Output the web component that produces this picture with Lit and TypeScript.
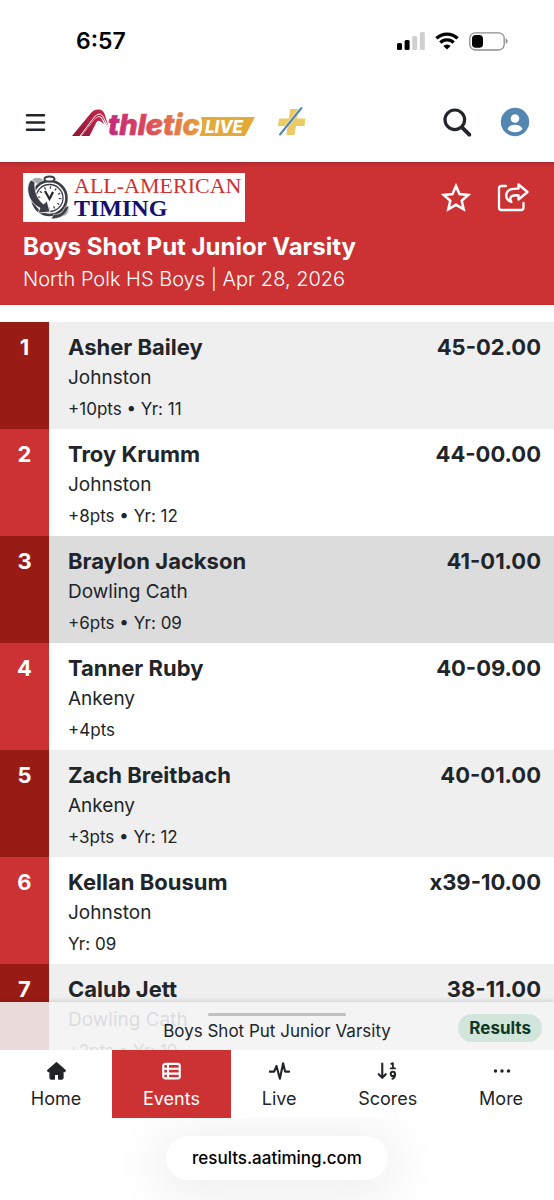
import { LitElement, html, css, svg, nothing } from "lit";
import { customElement, property, state } from "lit/decorators.js";
import { classMap } from "lit/directives/class-map.js";

interface Result {
  place: number;
  name: string;
  school: string;
  meta: string;
  mark: string;
  highlighted?: boolean;
}

const RESULTS: Result[] = [
  { place: 1, name: "Asher Bailey", school: "Johnston", meta: "+10pts • Yr: 11", mark: "45-02.00" },
  { place: 2, name: "Troy Krumm", school: "Johnston", meta: "+8pts • Yr: 12", mark: "44-00.00" },
  { place: 3, name: "Braylon Jackson", school: "Dowling Cath", meta: "+6pts • Yr: 09", mark: "41-01.00", highlighted: true },
  { place: 4, name: "Tanner Ruby", school: "Ankeny", meta: "+4pts", mark: "40-09.00" },
  { place: 5, name: "Zach Breitbach", school: "Ankeny", meta: "+3pts • Yr: 12", mark: "40-01.00" },
  { place: 6, name: "Kellan Bousum", school: "Johnston", meta: "Yr: 09", mark: "x39-10.00" },
  { place: 7, name: "Calub Jett", school: "Dowling Cath", meta: "+2pts • Yr: 10", mark: "38-11.00" },
];

const ICONS = {
  home: svg`<path d="M8 1.500 1 7.700l.6.7 1.300-.7v5.700a1 1 0 0 0 1 1h2.300v-3.800h3.600v3.800h2.300a1 1 0 0 0 1-1V7.700l1.300.7.6-.7z" fill="currentColor" stroke="currentColor" stroke-width="1.200" stroke-linejoin="round"/>`,
  events: svg`<rect x="1.400" y="2.300" width="13.200" height="11.600" rx="1.600" fill="none" stroke="currentColor" stroke-width="1.700"/><path d="M2 6.200h12M2 10.100h12M5.200 3v10.500" fill="none" stroke="currentColor" stroke-width="1.700"/>`,
  live: svg`<path d="M.2 8.500h3.600L5.700 4l2.700 10.200L11 1.800l1.600 6.700h3.200" transform="translate(-.1 0)" fill="none" stroke="currentColor" stroke-width="1.700" stroke-linecap="round" stroke-linejoin="round"/>`,
  scores: svg`<path d="M3.800 2v11.300M1 10.600l2.800 2.900 2.800-2.900" fill="none" stroke="currentColor" stroke-width="1.700" stroke-linecap="round" stroke-linejoin="round"/><path d="M11 2.300l1.300-.6v4M10.600 5.900h3.400" fill="none" stroke="currentColor" stroke-width="1.500" stroke-linecap="round" stroke-linejoin="round"/><circle cx="12.300" cy="10.300" r="1.700" fill="none" stroke="currentColor" stroke-width="1.600"/><path d="M14 10.500c0 1.900-.8 3.100-2 3.700" fill="none" stroke="currentColor" stroke-width="1.600" stroke-linecap="round"/>`,
  more: svg`<circle cx="3.200" cy="8" r="1.400" fill="currentColor"/><circle cx="8.400" cy="8" r="1.400" fill="currentColor"/><circle cx="13.600" cy="8" r="1.400" fill="currentColor"/>`,
};

type IconName = keyof typeof ICONS;

const TABS: { label: string; icon: IconName }[] = [
  { label: "Home", icon: "home" },
  { label: "Events", icon: "events" },
  { label: "Live", icon: "live" },
  { label: "Scores", icon: "scores" },
  { label: "More", icon: "more" },
];

@customElement("phone-status")
class PhoneStatus extends LitElement {
  static styles = css`
    :host {
      display: flex;
      align-items: center;
      justify-content: space-between;
      height: 82px;
      padding: 0 46px 0 76px;
      color: #000;
    }
    .time {
      font-size: 23px;
      font-weight: 600;
    }
    .icons {
      display: flex;
      align-items: center;
      gap: 10px;
    }
  `;

  render() {
    return html`
      <span class="time">6:57</span>
      <span class="icons">
        <svg width="28" height="18" viewBox="0 0 28 18">
          <rect x="0" y="11" width="5" height="7" rx="1.500" />
          <rect x="7.600" y="8" width="5" height="10" rx="1.500" />
          <rect x="15.200" y="4" width="5" height="14" rx="1.500" fill="#d0d0d0" />
          <rect x="22.800" y="0" width="5" height="18" rx="1.500" fill="#d0d0d0" />
        </svg>
        <svg width="24" height="18" viewBox="0 0 24 18">
          <g fill="none" stroke="#000" stroke-width="3.300">
            <path d="M1.400 6.400a15.200 15.200 0 0 1 21.200 0" />
            <path d="M5.300 10.600a9.700 9.700 0 0 1 13.400 0" />
          </g>
          <path d="M12 17.600 8.300 13.900a5.300 5.300 0 0 1 7.400 0z" />
        </svg>
        <svg width="39" height="19" viewBox="0 0 39 19">
          <rect x=".8" y=".8" width="34.400" height="17.200" rx="5.500" fill="none" stroke="#8c8c8c" stroke-width="1.300" />
          <rect x="3" y="3" width="11" height="12.800" rx="3.800" />
          <path d="M36.700 6.500v5.600a3 3 0 0 0 0-5.600z" fill="#8c8c8c" />
        </svg>
      </span>
    `;
  }
}

@customElement("site-bar")
class SiteBar extends LitElement {
  static styles = css`
    :host {
      display: flex;
      align-items: center;
      height: 80px;
      padding: 0 24px;
    }
    button,
    a {
      display: flex;
      margin: 0;
      padding: 0;
      border: 0;
      background: none;
      color: #212529;
      cursor: pointer;
    }
    .brand {
      margin-left: 26px;
    }
    .plus {
      margin-left: 21px;
    }
    .end {
      display: flex;
      align-items: center;
      gap: 28px;
      margin-left: auto;
    }
    .athletic {
      font: italic 800 29px Inter, sans-serif;
    }
    .live {
      font: italic 800 17px Inter, sans-serif;
    }
  `;

  render() {
    return html`
      <button aria-label="Menu">
        <svg width="22" height="22" viewBox="0 0 22 22">
          <path d="M3 4.200h17M3 11.500h17M3 18.700h17" stroke="currentColor" stroke-width="2.600" stroke-linecap="round" />
        </svg>
      </button>
      <a class="brand" href="#" aria-label="AthleticLIVE">
        <svg width="185" height="42" viewBox="0 -7 185 42">
          <defs>
            <linearGradient id="word" gradientUnits="userSpaceOnUse" x1="38" y1="0" x2="130" y2="0">
              <stop offset="0" stop-color="#c52a7c" />
              <stop offset=".35" stop-color="#d8435f" />
              <stop offset=".65" stop-color="#e2704c" />
              <stop offset="1" stop-color="#e2a03c" />
            </linearGradient>
            <linearGradient id="peak" gradientUnits="userSpaceOnUse" x1="0" y1="28" x2="36" y2="6">
              <stop offset="0" stop-color="#8c1530" />
              <stop offset="1" stop-color="#cc2950" />
            </linearGradient>
          </defs>
          <path d="M0 28 18.500 5.500Q22 1.300 26 1.500c4 0 5.500 1.500 6.800 5L37 20.500 31 11.500C29 7 25.500 7.200 22.500 11L9 28z" fill="url(#peak)" />
          <path d="M9.500 28 22.500 11.500c3-3.500 6-3.500 7.500.3l2 4.200-3.500-2.500c-1.500-1.300-2.700-1-3.900.6L17.500 28z" fill="url(#peak)" />
          <path d="M8 28 22 9.500c3.500-4.500 7.500-4.500 9.500 0L37 20.500" fill="none" stroke="#fff" stroke-width="1" />
          <path d="M129 9h54l-10 19h-45.500q4.500-9.500 1.500-19z" fill="#e2ab38" />
          <text class="athletic" x="36" y="27" fill="url(#word)" stroke="url(#word)" stroke-width=".7">thletic</text>
          <text class="live" x="133" y="25" fill="#fff">LIVE</text>
        </svg>
      </a>
      <a class="plus" href="#" aria-label="Athletic plus">
        <svg width="28" height="32" viewBox="0 0 28 30">
          <path d="M12.500 2.500h7.500l-1.500 9.500h8.500l-1 6.500h-8.500L16 27.500H8.800l1.500-9H.500l1-6.500h9.800z" fill="#ebcb65" stroke="#ebcb65" stroke-linejoin="round" />
          <path d="M2 27.500 23.500 1" stroke="#fff" stroke-width="3.600" stroke-linecap="round" opacity=".45" />
          <path d="M2 27.500 23.500 1" stroke="#4f86ae" stroke-width="2" stroke-linecap="round" />
        </svg>
      </a>
      <div class="end">
        <button aria-label="Search">
          <svg width="30" height="30" viewBox="0 0 30 30" fill="none" stroke="currentColor" stroke-linecap="round">
            <circle cx="12.800" cy="12.800" r="9.800" stroke-width="3.200" />
            <path d="m20 20.300 7.300 7.400" stroke-width="3.800" />
          </svg>
        </button>
        <button aria-label="Account">
          <svg width="30" height="30" viewBox="0 0 30 30">
            <circle cx="15" cy="15" r="14.200" fill="#5386b0" />
            <circle cx="15" cy="11.500" r="4.300" fill="#fff" />
            <path d="M7.500 22c1.300-3 4-4.200 7.500-4.200s6.200 1.200 7.500 4.200c-2 2.200-4.500 3.300-7.500 3.300S9.500 24.200 7.500 22z" fill="#fff" />
          </svg>
        </button>
      </div>
    `;
  }
}

@customElement("event-header")
class EventHeader extends LitElement {
  static styles = css`
    :host {
      display: block;
      padding: 11px 25px 10px 23px;
      background: linear-gradient(#ab2930, #cc3234 5px);
      color: #fff;
    }
    .top {
      display: flex;
      justify-content: space-between;
      align-items: center;
      margin-bottom: 9px;
    }
    .logo {
      display: block;
      background: #fff;
    }
    .line1 {
      font: 22px "Liberation Serif", serif;
    }
    .line2 {
      font: bold 24px "Liberation Serif", serif;
    }
    .actions {
      display: flex;
      gap: 25px;
    }
    button {
      display: flex;
      padding: 0;
      border: 0;
      background: none;
      color: inherit;
      cursor: pointer;
    }
    h1 {
      margin: 0;
      font-size: 24px;
      line-height: 32px;
      font-weight: 700;
    }
    p {
      margin: 0;
      font-size: 20px;
      line-height: 32px;
      font-weight: 300;
    }
  `;

  render() {
    return html`
      <div class="top">
        <svg class="logo" width="222" height="49" viewBox="0 0 222 49" role="img" aria-label="All-American Timing">
          <path d="M8 8c3-4 9-4 12-1l-5 4zM42 32c5 0 5 6 1 10l-8 3z" fill="#a8abae" />
          <circle cx="26.500" cy="25" r="17" fill="#fff" stroke="#3b3e45" stroke-width="2.600" />
          <circle cx="26.500" cy="25" r="13.500" fill="none" stroke="#3b3e45" stroke-width="1.300" />
          <circle cx="26.500" cy="25" r="10.500" fill="none" stroke="#3b3e45" stroke-width="2.500" stroke-dasharray="1.200 4.298" />
          <path d="M22 18l4.500 8 3.500-7" fill="none" stroke="#24262b" stroke-width="2.200" />
          <ellipse cx="26.500" cy="6" rx="5" ry="2.600" fill="#fff" stroke="#3b3e45" stroke-width="2" />
          <path d="M8 7C2 13 4 29 17 35l-2 5 12-1-3-11-3.500 3C14 26 11 17 12 9z" fill="#3b3e45" stroke="#fff" stroke-width=".8" />
          <path d="M46 33c-2 8-8 13-18 13l3-5c6 1 9-2 11-7z" fill="#3b3e45" stroke="#fff" stroke-width=".6" />
          <text class="line1" x="51" y="20" fill="#cf3030">ALL-AMERICAN</text>
          <text class="line2" x="51" y="43" fill="#15106e">TIMING</text>
        </svg>
        <div class="actions">
          <button aria-label="Add to favorites">
            <svg width="32" height="32" viewBox="0 0 32 32">
              <path d="m16 4 3.500 8.100 8.700.8-6.500 5.800 2 8.600-7.700-4.500-7.700 4.500 2-8.600-6.500-5.800 8.700-.8z" fill="none" stroke="currentColor" stroke-width="2.500" />
            </svg>
          </button>
          <button aria-label="Share">
            <svg width="32" height="32" viewBox="0 0 32 32" fill="none" stroke="currentColor" stroke-width="2.300" stroke-linecap="round" stroke-linejoin="round">
              <path d="M9 4H4.500A2.500 2.500 0 0 0 2 6.500V25.500A2.500 2.500 0 0 0 4.500 28H24a2.500 2.500 0 0 0 2.500-2.500V21" />
              <path d="M21.500 2.500 30.500 10l-9 7.500v-4.200c-5.500-.3-8 1.200-8.200 3.200-.1 1.500.6 2.500 1.100 3.500-3-1-5.400-3.500-5.200-7 .3-4.500 4.800-6.700 12.300-6.300z" />
            </svg>
          </button>
        </div>
      </div>
      <h1>Boys Shot Put Junior Varsity</h1>
      <p>North Polk HS Boys | Apr 28, 2026</p>
    `;
  }
}

@customElement("result-list")
class ResultList extends LitElement {
  @property({ attribute: false }) results: Result[] = [];

  static styles = css`
    :host {
      display: block;
      color: #212529;
    }
    table {
      width: 100%;
      border-collapse: collapse;
    }
    td,
    th {
      padding: 9px 0 4px;
      text-align: left;
      vertical-align: top;
      font-weight: 400;
    }
    .row {
      background: #fff;
    }
    .row.odd {
      background: #efefef;
    }
    .row.highlighted {
      background: #dcdcdc;
    }
    .place {
      width: 49px;
      background: #cc3234;
      color: #fff;
      text-align: center;
      font-size: 22px;
      line-height: 32px;
      font-weight: 700;
    }
    .odd .place {
      background: #981c15;
    }
    .athlete {
      padding-left: 19px;
    }
    .name,
    .mark {
      font-size: 22px;
      line-height: 32px;
      font-weight: 700;
    }
    .mark {
      padding-right: 13px;
      text-align: right;
    }
    .school {
      font-size: 19px;
      line-height: 30px;
    }
    .meta {
      font-size: 17px;
      line-height: 32px;
    }
  `;

  render() {
    return html`
      <table aria-label="Results">
        <tbody>
          ${this.results.map(
            (r) => html`
              <tr class=${classMap({ row: true, odd: r.place % 2 === 1, highlighted: !!r.highlighted })}>
                <td class="place">${r.place}</td>
                <th class="athlete" scope="row">
                  <div class="name">${r.name}</div>
                  <div class="school">${r.school}</div>
                  <div class="meta">${r.meta}</div>
                </th>
                <td class="mark">${r.mark}</td>
              </tr>
            `
          )}
        </tbody>
      </table>
    `;
  }
}

@customElement("tab-bar")
class TabBar extends LitElement {
  @state() private active = "Events";

  static styles = css`
    :host {
      display: block;
    }
    nav {
      display: flex;
      background: #fff;
    }
    a {
      display: flex;
      flex: 1 1 auto;
      flex-direction: column;
      align-items: center;
      gap: 4px;
      padding: 11px 0 6px;
      color: #212529;
      font-size: 18px;
      line-height: 27px;
      text-decoration: none;
    }
    a.active {
      background: #cc3234;
      color: #fff;
    }
  `;

  render() {
    return html`
      <nav>
        ${TABS.map(
          (t) => html`
            <a
              href="#"
              class=${classMap({ active: t.label === this.active })}
              aria-current=${t.label === this.active ? "page" : nothing}
              @click=${() => (this.active = t.label)}
            >
              <svg width="21" height="20" viewBox="0 0 16 16">${ICONS[t.icon]}</svg>
              ${t.label}
            </a>
          `
        )}
      </nav>
    `;
  }
}

@customElement("app-root")
class AppRoot extends LitElement {
  static styles = css`
    :host {
      display: flex;
      flex-direction: column;
      height: 100vh;
      overflow: hidden;
      background: #fff;
      font-family: Inter, sans-serif;
    }
    .content {
      position: relative;
      flex: 1;
      min-height: 0;
      overflow: hidden;
      padding-top: 17px;
    }
    .sheet {
      position: absolute;
      inset: auto 0 0;
      display: grid;
      grid-template-columns: 1fr auto 1fr;
      align-items: center;
      box-sizing: border-box;
      height: 48px;
      padding: 3px 12px 0;
      background: rgba(245, 245, 246, 0.88);
      box-shadow: 0 0 6px rgba(0, 0, 0, 0.2);
      color: #212529;
    }
    .current {
      grid-column: 2;
      display: flex;
      flex-direction: column;
      align-items: center;
      gap: 4px;
      font-size: 17px;
      line-height: 22px;
    }
    .handle {
      width: 138px;
      height: 3px;
      border-radius: 2px;
      background: #bfc1c3;
    }
    .badge {
      justify-self: end;
      padding: 0 11px;
      border-radius: 14px;
      background: #d1e5db;
      color: #0f3826;
      font-size: 17px;
      line-height: 28px;
      font-weight: 700;
    }
    tab-bar {
      position: relative;
    }
    .browser {
      display: flex;
      justify-content: center;
      padding: 18px 0 20px;
      overflow: hidden;
    }
    .address {
      padding: 0 26px;
      border-radius: 22px;
      background: #fff;
      box-shadow: 0 6px 50px 10px rgba(0, 0, 0, 0.07);
      color: #000;
      font-size: 17px;
      line-height: 44px;
      font-weight: 500;
    }
  `;

  render() {
    return html`
      <phone-status></phone-status>
      <site-bar></site-bar>
      <event-header></event-header>
      <div class="content">
        <result-list .results=${RESULTS}></result-list>
        <div class="sheet">
          <div class="current">
            <span class="handle"></span>
            <span>Boys Shot Put Junior Varsity</span>
          </div>
          <span class="badge">Results</span>
        </div>
      </div>
      <tab-bar></tab-bar>
      <div class="browser"><span class="address">results.aatiming.com</span></div>
    `;
  }
}
